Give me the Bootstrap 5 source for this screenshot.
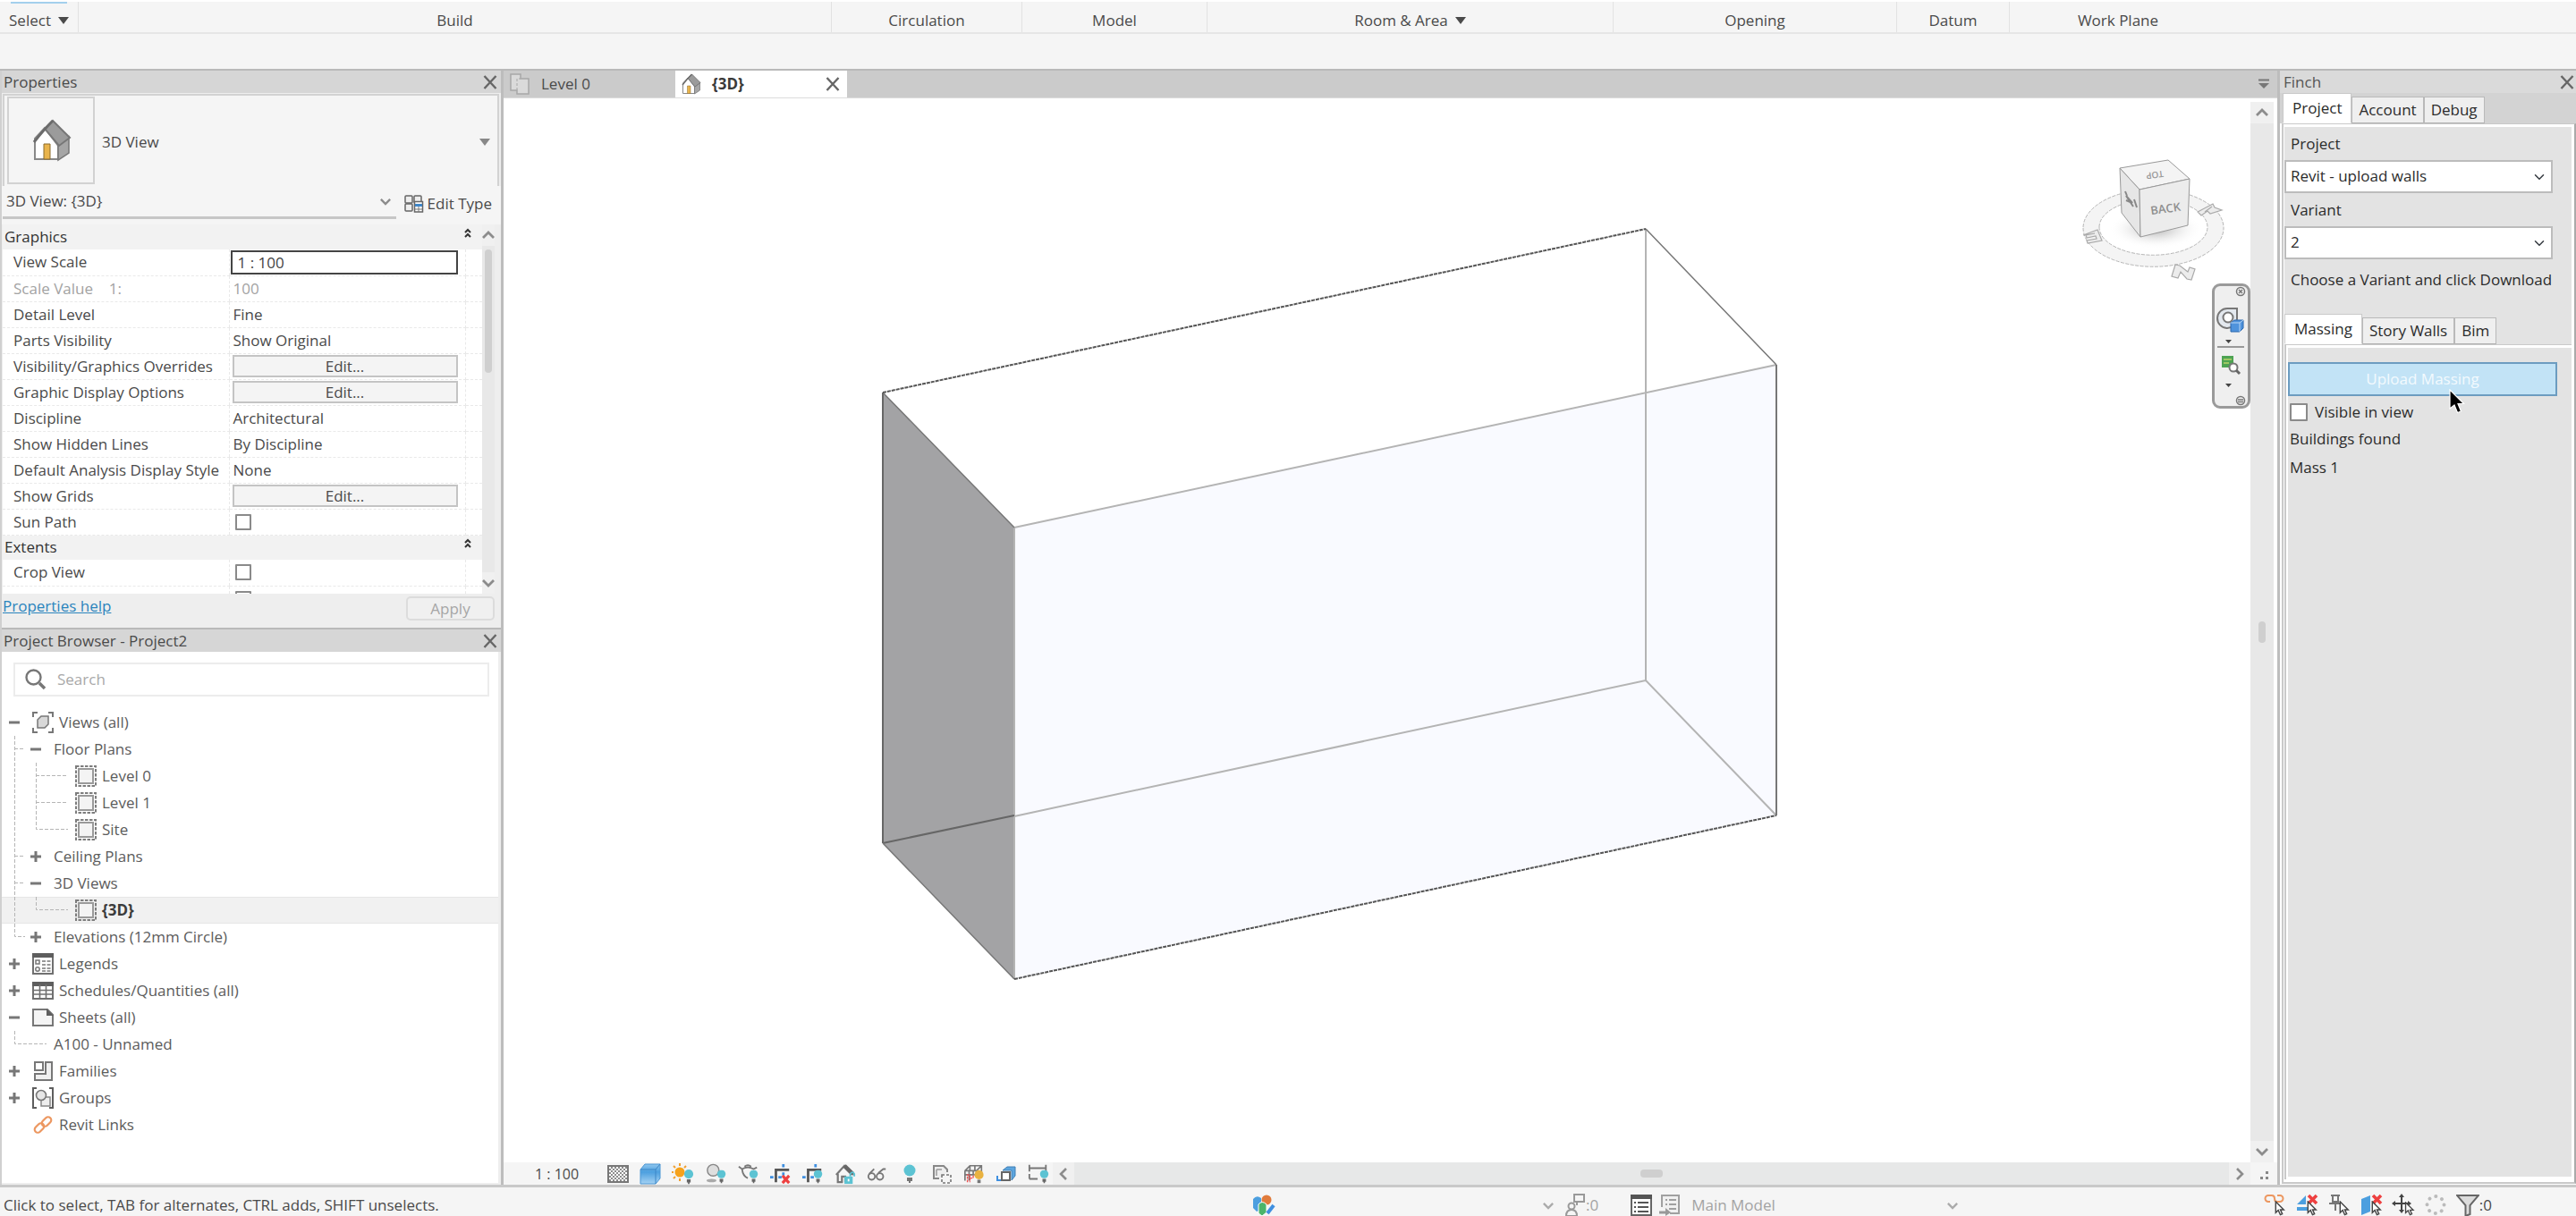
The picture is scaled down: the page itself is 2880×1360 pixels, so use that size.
<!DOCTYPE html>
<html lang="en">
<head>
<meta charset="utf-8">
<meta name="viewport" content="width=device-width, initial-scale=1">
<title>Project2 - {3D}</title>
<link rel="stylesheet" href="https://cdn.jsdelivr.net/npm/bootstrap@5.3.0/dist/css/bootstrap.min.css">
<style>
:root{--line:#bdbdbd;--soft:#f5f5f5;--bar:#d6d6d6}
body{font-family:"Open Sans","Noto Sans",sans-serif;font-size:17px;line-height:20px;color:#4a4a4a;background:#f5f5f5;min-height:100vh}
svg{display:block;flex:none}
button{font:inherit;color:inherit}
.plain{background:none;border:0;padding:0}
.ribbon{height:38px;border-top:2px solid #fff;border-bottom:2px solid #e6e6e6}
.rb-group{border-right:1px solid #e2e2e2;padding-top:7px}
.w-select{width:88px;padding-top:0}
.w-select .plain{padding-top:5px}
.w-build{width:842px}.w-circ{width:213px}.w-model{width:207px}.w-room{width:454px}.w-open{width:317px}.w-datum{width:126px}.w-plane{width:242px;border-right:0}
.blue-strip{height:2px;margin:0 12px;background:#a3cfec}
.options{height:39px}
.work{border-top:2px solid #b9b9b9;border-bottom:3px solid #c9c9c9}
.dock-left{width:563px;border-left:2px solid #d0d0d0;border-right:3px solid var(--line);background:#eee}
.dock-title{height:25px;background:var(--bar);padding:0 4px 0 2px}
.type-box{margin:1px 2px 0 1px;border:2px solid #d2d2d2;border-bottom:0;height:103px;padding:2px 0 0 3px;background:var(--soft)}
.type-thumb{width:98px;height:98px;border:2px solid #d2d2d2}
.inst{height:43px;background:var(--soft);padding:0 10px 0 1px}
.inst-pick{width:440px;height:37px;border-bottom:3px solid #c6c6c6;padding:0 6px 0 4px}
.prop-wrap{height:413px;overflow:hidden;margin:0 7px 0 1px;background:#fff}
.prop-table{table-layout:fixed;width:100%;border-collapse:collapse}
.prop-table td,.prop-table th{height:29px;padding:0;font-weight:400;vertical-align:middle;overflow:hidden;white-space:nowrap}
.prop-table tr.head th{height:28px;background:#f2f2f2;padding:0 12px 0 2px;color:#333}
.prop-table tbody td,.prop-table tbody tr:not(.head) th{border-bottom:1px dashed #e9e9e9}
.prop-table tbody tr:not(.head) th{padding-left:12px}
.prop-table td.val{border-left:1px dashed #e9e9e9;border-right:1px dashed #e9e9e9;padding-left:4px}
.c-name{width:253px}.c-end{width:18px}
.dim{color:#a3a3a3}
.scale-in{width:254px;height:27px;margin-left:-3px;border:2px solid #444;padding:0 6px;color:#444;display:block;background:#fff}
.edit-btn{display:block;width:252px;height:25px;margin-left:-1px;line-height:20px;border:2px solid #c4c4c4;background:#f4f4f4;padding:0}
.tick{appearance:none;width:18px;height:18px;border:2px solid #8a8a8a;background:#fff;display:block;margin:0 0 0 2px;border-radius:1px}
.tick-lg{width:20px;height:20px}
.vbar{width:26px;background:#e8e8e8}
.vbar button,.hbar button{background:#f0f0f0;border:0;padding:0;display:grid;place-items:center}
.vbar button{height:24px;width:100%}
.vthumb{width:8px;border-radius:4px;background:#cfcfcf}
.prop-foot{height:38px;padding:0 7px 0 1px}
.prop-foot a{color:#2a84bd}
.apply{width:99px;height:27px;margin-top:3px;border:2px solid #dcdcdc;border-radius:5px;background:#f0f0f0;color:#a6a6a6;padding:0}
.browser{border-top:2px solid #b9b9b9}
.tree-pane{background:#fff;margin:0 3px 2px 0}
.find{margin:12px 10px 14px 13px;height:38px;border:2px solid #ececec;padding-left:11px;gap:12px}
.find input{border:0;outline:0;background:none}
.find input::placeholder{color:#a9a9a9;opacity:1}
.tree-row{height:30px;padding-left:2px;color:#5c5c5c}
.tree-row.sel{background:#f1f1f1;border-top:1px solid #e6e6e6;border-bottom:1px solid #e6e6e6;font-weight:700;color:#3c3c3c}
.cell{width:24px;display:grid;place-items:center;height:30px}
.t-lbl{margin-left:6px}.t-sub{margin-left:8px}
.view-tabs{height:31px;background:#cbcbcb;border-bottom:1px solid #dcdcdc}
.vtab{width:192px;padding:0 8px 0 6px}
.vtab.on{background:#fff;font-weight:700;color:#3a3a3a}
.stage{background:#fff}
.canvas-pane{min-height:600px}
.cube{position:absolute;top:68px;right:0;width:196px}
.navbar-pad{position:absolute;top:207px;right:0;width:43px;height:140px;border:3px solid #9a9a9a;border-radius:9px;background:#efefef}
.view-foot{height:25px;background:var(--soft);padding-left:3px}
.scale-lbl{font-size:16px}
.vc{gap:12px}
.hbar{background:#e7e8e8}
.hbar button{height:25px;width:24px}
.hthumb{width:25px;height:9px;border-radius:4px;background:#cfcfcf}
.dock-right{width:334px;border-left:3px solid var(--line);background:#fff;color:#2b2b2b}
.dock-right .dock-title{background:#dadada;height:25px;padding:0 2px 0 4px;color:#555}
.tab-strip{background:#d3d3d3;height:34px;padding-left:3px}
.tab-strip.inner{background:#e3e3e3;padding-left:0}
.tb{height:30px;border:1px solid #b9b9b9;border-bottom-color:#b0b0b0;background:#efefef;padding:0 7px}
.tb.on{height:34px;background:#fff;border-color:#c9c9c9 #c9c9c9 #fff;padding:0 10px}
.page-outer{border:2px solid #c9c9c9;border-top:1px solid #c9c9c9;border-right-color:#aaa;margin-left:2px;margin-bottom:1px;padding:3px 3px 3px 1px}
.page-body{background:#e3e3e3}
.page-inner{border-left:2px solid #c9c9c9;border-top:1px solid #c9c9c9;background:#fff;padding:3px 0 3px 2px}
.fld{display:block;padding:0 0 0 7px;line-height:21px}
.pick{width:300px;height:37px;border:2px solid #bcbcbc;border-radius:0;padding:0 30px 2px 5px;font-size:17px;line-height:20px;color:#2b2b2b;background-color:#fff;background-size:12px 12px;background-position:right 7px center}
.upload{width:301px;height:38px;border:2px solid #6c9cc0;background:#c2e3f6;color:#f3fafe;padding:0}
.found{line-height:24px;padding-left:2px}
.pointer{position:absolute;left:180px;top:30px}
.status{height:32px;padding-top:8px}
.st-hint{width:1400px}
.st-mid{width:319px}
.st-list{margin-left:36px}
.st-model{margin-left:12px;width:298px}
.st-sel{gap:10px;padding-right:94px}
</style>
<script src="https://cdn.jsdelivr.net/npm/bootstrap@5.3.0/dist/js/bootstrap.bundle.min.js"></script>
</head>
<body class="d-flex flex-column">
<svg width="0" height="0" class="position-absolute" aria-hidden="true">
<defs>
<linearGradient id="gb" x1="0" y1="0" x2="0" y2="1"><stop offset="0" stop-color="#8fc6ee"/><stop offset=".4" stop-color="#4c9fdf"/><stop offset="1" stop-color="#a5d2f3"/></linearGradient>
<symbol id="x" viewBox="0 0 16 16"><path d="M1.500 1 14.500 15M14.500 1 1.500 15" stroke="#666" stroke-width="2.400" fill="none"/></symbol>
<symbol id="up" viewBox="0 0 14 10"><path d="M1 8 7 2 13 8" stroke="#8c8c8c" stroke-width="2.800" fill="none"/></symbol>
<symbol id="dn" viewBox="0 0 14 10"><path d="M1 2 7 8 13 2" stroke="#8c8c8c" stroke-width="2.800" fill="none"/></symbol>
<symbol id="lf" viewBox="0 0 10 14"><path d="M8 1 2 7 8 13" stroke="#8c8c8c" stroke-width="2.600" fill="none"/></symbol>
<symbol id="rt" viewBox="0 0 10 14"><path d="M2 1 8 7 2 13" stroke="#8c8c8c" stroke-width="2.600" fill="none"/></symbol>
<symbol id="tri" viewBox="0 0 12 8"><path d="M0 0H12L6 8Z" fill="currentColor"/></symbol>
<symbol id="dbl" viewBox="0 0 8 12"><path d="M1 5 4 2 7 5M1 10 4 7 7 10" stroke="#333" stroke-width="2" fill="none"/></symbol>
<symbol id="minus" viewBox="0 0 14 14"><path d="M1 7H13" stroke="#777" stroke-width="3"/></symbol>
<symbol id="plus" viewBox="0 0 14 14"><path d="M1 7H13M7 1V13" stroke="#777" stroke-width="3"/></symbol>
<symbol id="gv" viewBox="0 0 24 30"><path d="M12.500 0V30" stroke="#b5b5b5" stroke-dasharray="4 2"/></symbol>
<symbol id="gt" viewBox="0 0 24 30"><path d="M12.500 0V30M12 14.500H24" stroke="#b5b5b5" stroke-dasharray="4 2" fill="none"/></symbol>
<symbol id="gl" viewBox="0 0 24 30"><path d="M12.500 0V14.500H24" stroke="#b5b5b5" stroke-dasharray="4 2" fill="none"/></symbol>
<symbol id="gtw" viewBox="0 0 48 30"><path d="M12.500 0V30M12 14.500H48" stroke="#b5b5b5" stroke-dasharray="4 2" fill="none"/></symbol>
<symbol id="glw" viewBox="0 0 48 30"><path d="M12.500 0V14.500H48" stroke="#b5b5b5" stroke-dasharray="4 2" fill="none"/></symbol>
<symbol id="house" viewBox="0 0 46 48"><path d="M5 22 16 10 31 30V45H5Z" fill="#fff" stroke="#888" stroke-width="2"/><path d="M31 28 43 20V38L31 46Z" fill="#a6a6a6" stroke="#777" stroke-width="1.500"/><path d="M25 2 44 21 32 30 16 11Z" fill="#9b9b9b" stroke="#777" stroke-width="2"/><path d="M25 2Q15 12 4 26" stroke="#6b6b6b" stroke-width="3" fill="none"/><path d="M15 28H22V45H15Z" fill="#e9b44c" stroke="#8a6a2c" stroke-width="1"/></symbol>
<symbol id="plan" viewBox="0 0 24 24"><path d="M2 1H13V6H22V23H9V19H2Z" fill="#dadada" stroke="#a8a8a8" stroke-width="1.500"/><path d="M9 19V6H13" fill="none" stroke="#a8a8a8" stroke-dasharray="3 2"/></symbol>
<symbol id="etype" viewBox="0 0 22 20"><rect x="1" y="1" width="8" height="8" rx="1" fill="#eee" stroke="#666" stroke-width="1.500"/><rect x="11" y="1" width="8" height="8" rx="1" fill="#eee" stroke="#666" stroke-width="1.500"/><rect x="1" y="10" width="8" height="8" rx="1" fill="#eee" stroke="#666" stroke-width="1.500"/><path d="M11.500 7.500H20.500V19H11.500Z" fill="#fff" stroke="#666" stroke-width="1.500"/><path d="M12 10H20V13H12Z" fill="#3f86c8"/><path d="M12 16H20M16 13V19" stroke="#777"/></symbol>
<symbol id="lens" viewBox="0 0 24 24"><circle cx="9.500" cy="9.500" r="8" fill="none" stroke="#777" stroke-width="2.400"/><path d="M16 16 22 22" stroke="#777" stroke-width="3.600"/></symbol>
<symbol id="views" viewBox="0 0 24 24"><path d="M1 6V1H6M18 1H23V6M23 18V23H18M6 23H1V18" fill="none" stroke="#777" stroke-width="2"/><path d="M6 9 10 5H18V14L14 18H6Z" fill="#d8d8d8" stroke="#777" stroke-width="1.500"/></symbol>
<symbol id="sheetv" viewBox="0 0 24 24"><rect x="1" y="1" width="22" height="22" fill="none" stroke="#7d7d7d" stroke-width="2" stroke-dasharray="3.500 1.500"/><rect x="4" y="4" width="16" height="16" fill="#f4f4f4" stroke="#9a9a9a" stroke-width="2"/></symbol>
<symbol id="legend" viewBox="0 0 24 24"><rect x="1" y="1" width="22" height="22" fill="#fff" stroke="#707070" stroke-width="2"/><path d="M0 0H24V5H0Z" fill="#5e5e5e"/><rect x="4" y="8" width="4" height="4" fill="none" stroke="#777" stroke-width="1.500"/><circle cx="6" cy="18" r="2.200" fill="none" stroke="#777" stroke-width="1.500"/><path d="M11 9H21M11 13H21M11 17H21M11 20H21" stroke="#777" stroke-width="1.500" stroke-dasharray="4 1.500"/></symbol>
<symbol id="sched" viewBox="0 0 24 24"><rect x="1" y="3" width="22" height="18" fill="#fff" stroke="#707070" stroke-width="2"/><path d="M0 2H24V7H0Z" fill="#5e5e5e"/><path d="M1 11.500H23M1 16H23M8.500 5V21M15.500 5V21" stroke="#707070" stroke-width="1.600"/></symbol>
<symbol id="sheet" viewBox="0 0 24 24"><path d="M1 3H17L23 9V21H1Z" fill="#f4f4f4" stroke="#777" stroke-width="2"/><path d="M16 2 24 10H16Z" fill="#5e5e5e"/></symbol>
<symbol id="fam" viewBox="0 0 24 24"><rect x="3" y="2" width="9" height="9" fill="#fff" stroke="#777" stroke-width="2"/><path d="M15 2H22V22H3V15H15Z" fill="#f0f0f0" stroke="#777" stroke-width="2"/></symbol>
<symbol id="grp" viewBox="0 0 24 24"><path d="M5 1H1V23H5M19 1H23V23H19" fill="none" stroke="#5e5e5e" stroke-width="2"/><rect x="10" y="11" width="10" height="10" fill="#eee" stroke="#888" stroke-width="1.500"/><circle cx="10" cy="9" r="5.500" fill="#e6e6e6" stroke="#777" stroke-width="1.600"/></symbol>
<symbol id="link" viewBox="0 0 24 24"><g fill="none" stroke="#ec9760" stroke-width="2.200"><rect x="-6" y="-3.500" width="12" height="7" rx="3.500" transform="translate(8 15.500) rotate(-45)"/><rect x="-6" y="-3.500" width="12" height="7" rx="3.500" transform="translate(16 8.500) rotate(-45)"/></g></symbol>
<symbol id="bulb" viewBox="0 0 12 20"><circle cx="6" cy="6" r="6" fill="#5cc3d3"/><path d="M3.500 13H8.500V17H7V19H5V17H3.500Z" fill="#666"/></symbol>
<pattern id="chk" width="4" height="4" patternUnits="userSpaceOnUse"><path d="M0 0H2V2H0ZM2 2H4V4H2Z" fill="#8c8c8c"/></pattern>
<symbol id="v1" viewBox="0 0 24 24"><rect x="1" y="3" width="22" height="18" fill="#fff"/><rect x="1" y="3" width="22" height="18" fill="url(#chk)" stroke="#777" stroke-width="2"/></symbol>
<symbol id="v2" viewBox="0 0 24 24"><path d="M1 7 6 1H23V17L18 23H1Z" fill="url(#gb)" stroke="#4b96d4"/><path d="M1 7H18V23M18 7 23 1" fill="none" stroke="#3d86c6"/></symbol>
<symbol id="v3" viewBox="0 0 26 24"><circle cx="9" cy="10" r="5.500" fill="#f6a21b"/><path d="M9 0V3M9 17V20M0 10H2M16 10H19M2 3 4 5M16 3 14 5M2 17 4 15" stroke="#f0a030" stroke-width="2"/><use href="#bulb" x="13" y="7" width="12" height="17"/></symbol>
<symbol id="v4" viewBox="0 0 26 24"><circle cx="9" cy="7.500" r="7" fill="#dedede" stroke="#888" stroke-width="1.600"/><ellipse cx="7" cy="20" rx="6" ry="2" fill="#aaa"/><use href="#bulb" x="13" y="7" width="12" height="17"/></symbol>
<symbol id="v5" viewBox="0 0 26 24"><path d="M1 3 5 6Q12 2 19 6L23 4M5 6Q6 15 12 17M8 3Q12 0 16 3" fill="none" stroke="#777" stroke-width="2"/><use href="#bulb" x="13" y="7" width="12" height="17"/></symbol>
<symbol id="crop" viewBox="0 0 26 24"><path d="M7 22V7H23" fill="none" stroke="#555" stroke-width="3"/><path d="M16 0V4M0 16H4M16 10V14M10 16H14" stroke="#3f8fe0" stroke-width="3"/></symbol>
<symbol id="v6" viewBox="0 0 26 24"><use href="#crop" width="26" height="24"/><path d="M15 14 23 23M23 14 15 23" stroke="#ee4040" stroke-width="3.400"/></symbol>
<symbol id="v7" viewBox="0 0 26 24"><use href="#crop" width="26" height="24"/><use href="#bulb" x="13" y="7" width="12" height="17"/></symbol>
<symbol id="v8" viewBox="0 0 26 24"><path d="M2 13 12 2 23 13M4 12V22H9V15H13V22" fill="none" stroke="#777" stroke-width="2.400"/><path d="M12 2 22 12" stroke="#666" stroke-width="5"/><path d="M12 15H22V24H12Z" fill="#5cc3d3"/><path d="M19 15V12Q22 8 24 12V15" fill="none" stroke="#5cc3d3" stroke-width="2"/><path d="M17 18V21" stroke="#fff" stroke-width="2"/></symbol>
<symbol id="v9" viewBox="0 0 26 24"><g fill="none" stroke="#777" stroke-width="2"><circle cx="6" cy="15" r="4"/><circle cx="16" cy="15" r="4"/><path d="M3 12 9 6M14 11 20 6H23"/></g></symbol>
<symbol id="v10" viewBox="0 0 24 24"><circle cx="12" cy="8" r="6.500" fill="#5cc3d3"/><path d="M9 16H15V20H13V22H11V20H9Z" fill="#777"/></symbol>
<symbol id="v11" viewBox="0 0 24 24"><path d="M18 10V7L14 3H3V17H9" fill="#eee" stroke="#888" stroke-width="2"/><path d="M6 7H12M6 7V14" stroke="#999" stroke-width="1.500"/><rect x="12" y="13" width="10" height="9" fill="none" stroke="#777" stroke-width="1.600" stroke-dasharray="3 2"/></symbol>
<symbol id="v12" viewBox="0 0 26 24"><path d="M2 8 8 2H22V9M2 8H16V12M2 8V20M2 13H14M7 8V20M12 8V14M8 2V8M14 2V8M22 2 16 8" fill="none" stroke="#777" stroke-width="1.800"/><path d="M5 22V13H8V22M8 17H12V13" fill="none" stroke="#ee5050" stroke-width="1.500" stroke-dasharray="3 1"/><circle cx="19" cy="13" r="5.500" fill="#e9b240"/><path d="M17 19H21V23H17Z" fill="#777"/></symbol>
<symbol id="v13" viewBox="0 0 24 24"><path d="M8 8 13 4H22V14L18 19V8Z" fill="#5ca5de" stroke="#3f7fb5"/><rect x="7" y="10" width="9" height="9" fill="#fff" stroke="#666" stroke-width="2"/><path d="M2 14V19H6" fill="none" stroke="#3f8fe0" stroke-width="2"/></symbol>
<symbol id="v14" viewBox="0 0 26 24"><path d="M2 1V9M22 1V9M2 5H22M2 12V18M2 18H12" fill="none" stroke="#777" stroke-width="2"/><use href="#bulb" x="14" y="7" width="12" height="17"/></symbol>
<symbol id="arr" viewBox="0 0 12 18"><path d="M1 1V14L4 11 6.500 16.500 8.800 15.500 6.500 10.500H10.500Z" fill="#fff" stroke="#444" stroke-width="1.500"/></symbol>
<symbol id="s1" viewBox="0 0 26 26"><path d="M8 9H6A3.500 3.500 0 0 1 6 2H10Q13 2 13 5.500T16 9H19A3.500 3.500 0 0 0 19 2H16" fill="none" stroke="#ec9760" stroke-width="2"/><use href="#arr" x="13" y="8" width="12" height="17"/></symbol>
<symbol id="s2" viewBox="0 0 26 26"><path d="M2 12 12 2V12ZM2 15H14V19H2Z" fill="#4c9fdf"/><path d="M15 2 24 11M24 2 15 11" stroke="#ee4040" stroke-width="3.600"/><use href="#arr" x="13" y="8" width="12" height="17"/></symbol>
<symbol id="s3" viewBox="0 0 26 26"><path d="M4 2H14M6 2V9H12V2M2 11H16M9 11V19" fill="none" stroke="#777" stroke-width="2"/><use href="#arr" x="13" y="8" width="12" height="17"/></symbol>
<symbol id="s4" viewBox="0 0 26 26"><path d="M2 6 12 2V20L2 24Z" fill="#4c9fdf"/><path d="M15 2 24 11M24 2 15 11" stroke="#ee4040" stroke-width="3.600"/><use href="#arr" x="13" y="8" width="12" height="17"/></symbol>
<symbol id="s5" viewBox="0 0 26 26"><path d="M11 2V20M2 11H20" stroke="#444" stroke-width="2"/><path d="M11 0 14 4H8ZM11 22 14 18H8ZM0 11 4 8V14ZM22 11 18 8V14Z" fill="#444"/><use href="#arr" x="14" y="9" width="12" height="16"/></symbol>
<symbol id="s6" viewBox="0 0 26 26"><circle cx="13" cy="12.500" r="9.500" fill="none" stroke="#bbb" stroke-width="4" stroke-linecap="round" stroke-dasharray="0.100 7.360"/></symbol>
<symbol id="s7" viewBox="0 0 26 26"><path d="M1 2H25L15.500 13V23L10.500 25V13Z" fill="#dcdcdc" stroke="#666" stroke-width="2"/></symbol>
<symbol id="m0" viewBox="0 0 26 26"><path d="M1 6Q5 1 10 5V18L5 20 1 16Z" fill="#4c9fdf"/><circle cx="16" cy="7" r="5.500" fill="#e07b3c"/><path d="M7 12Q11 7 16 12V21L11 25 7 22Z" fill="#4cb56a" stroke="#fff"/><path d="M24 13 17 22" stroke="#3f8fe0" stroke-width="4"/></symbol>
<symbol id="m1" viewBox="0 0 24 26"><rect x="11" y="1" width="11" height="8" fill="#f5f5f5" stroke="#999" stroke-width="2"/><path d="M14 9V13" stroke="#999" stroke-width="2"/><circle cx="8" cy="14" r="3.500" fill="none" stroke="#999" stroke-width="2"/><path d="M2 25Q2 18 8 18T14 25Z" fill="none" stroke="#999" stroke-width="2"/></symbol>
<symbol id="m2" viewBox="0 0 24 24"><rect x="1" y="1" width="22" height="22" fill="#fff" stroke="#666" stroke-width="2"/><path d="M0 0H24V5H0Z" fill="#555"/><path d="M4 9H6M4 14H6M4 19H6M8 9H20M8 14H20M8 19H20" stroke="#555" stroke-width="2"/></symbol>
<symbol id="m3" viewBox="0 0 24 24"><path d="M3 14V1H22V21H12" fill="#f0f0f0" stroke="#a0a0a0" stroke-width="2"/><path d="M7 6H9M7 11H9M11 6H19M11 11H19M11 16H19" stroke="#a0a0a0" stroke-width="2"/><path d="M0 20H8" stroke="#999" stroke-width="3"/><path d="M7 15 13 20 7 24Z" fill="#999"/></symbol>
</defs>
</svg>

<header class="ribbon d-flex">
  <div class="rb-group w-select d-flex flex-column"><div class="blue-strip"></div>
    <button class="plain flex-grow-1 d-flex align-items-center justify-content-center gap-2">Select <svg width="12" height="8"><use href="#tri"/></svg></button></div>
  <div class="rb-group w-build d-flex align-items-center justify-content-center">Build</div>
  <div class="rb-group w-circ d-flex align-items-center justify-content-center">Circulation</div>
  <div class="rb-group w-model d-flex align-items-center justify-content-center">Model</div>
  <div class="rb-group w-room d-flex align-items-center justify-content-center"><button class="plain d-flex align-items-center gap-2">Room &amp; Area <svg width="12" height="8"><use href="#tri"/></svg></button></div>
  <div class="rb-group w-open d-flex align-items-center justify-content-center">Opening</div>
  <div class="rb-group w-datum d-flex align-items-center justify-content-center">Datum</div>
  <div class="rb-group w-plane d-flex align-items-center justify-content-center">Work Plane</div>
</header>
<div class="options"></div>

<main class="work d-flex flex-grow-1">
  <aside class="dock-left d-flex flex-column flex-shrink-0">
    <div class="dock-title d-flex align-items-center justify-content-between"><span>Properties</span><button class="plain" aria-label="Close properties"><svg width="16" height="16"><use href="#x"/></svg></button></div>
    <div class="type-box d-flex align-items-center">
      <div class="type-thumb d-flex align-items-center justify-content-center mb-1"><svg width="46" height="48"><use href="#house"/></svg></div>
      <span class="ms-2 flex-grow-1">3D View</span>
      <svg class="me-2" width="12" height="8" color="#888"><use href="#tri"/></svg>
    </div>
    <div class="inst d-flex justify-content-between">
      <div class="inst-pick d-flex align-items-center justify-content-between"><span>3D View: {3D}</span><svg width="12" height="9"><use href="#dn"/></svg></div>
      <button class="plain d-flex align-items-center gap-1 pb-1"><svg width="22" height="20"><use href="#etype"/></svg>Edit Type</button>
    </div>
    <div class="prop-wrap d-flex">
      <div class="flex-grow-1">
      <table class="prop-table">
        <colgroup><col class="c-name"><col><col class="c-end"></colgroup>
        <tbody>
        <tr class="head"><th colspan="3"><div class="d-flex justify-content-between"><span>Graphics</span><svg width="8" height="12"><use href="#dbl"/></svg></div></th></tr>
        <tr><th><label for="vs">View Scale</label></th><td class="val"><input id="vs" class="scale-in" value="1 : 100"></td><td></td></tr>
        <tr class="dim"><th>Scale Value &nbsp;&nbsp; 1:</th><td class="val">100</td><td></td></tr>
        <tr><th>Detail Level</th><td class="val">Fine</td><td></td></tr>
        <tr><th>Parts Visibility</th><td class="val">Show Original</td><td></td></tr>
        <tr><th>Visibility/Graphics Overrides</th><td class="val"><button class="edit-btn">Edit...</button></td><td></td></tr>
        <tr><th>Graphic Display Options</th><td class="val"><button class="edit-btn">Edit...</button></td><td></td></tr>
        <tr><th>Discipline</th><td class="val">Architectural</td><td></td></tr>
        <tr><th>Show Hidden Lines</th><td class="val">By Discipline</td><td></td></tr>
        <tr><th>Default Analysis Display Style</th><td class="val">None</td><td></td></tr>
        <tr><th>Show Grids</th><td class="val"><button class="edit-btn">Edit...</button></td><td></td></tr>
        <tr><th><label for="sp">Sun Path</label></th><td class="val"><input id="sp" type="checkbox" class="tick"></td><td></td></tr>
        <tr class="head"><th colspan="3"><div class="d-flex justify-content-between"><span>Extents</span><svg width="8" height="12"><use href="#dbl"/></svg></div></th></tr>
        <tr><th><label for="cv">Crop View</label></th><td class="val"><input id="cv" type="checkbox" class="tick"></td><td></td></tr>
        <tr><th><label for="cr">Crop Region Visible</label></th><td class="val"><input id="cr" type="checkbox" class="tick"></td><td></td></tr>
        </tbody>
      </table>
      </div>
      <div class="vbar d-flex flex-column align-items-center">
        <button aria-label="Scroll up"><svg width="14" height="10"><use href="#up"/></svg></button>
        <div class="vthumb mt-1" style="height:138px"></div>
        <button class="mt-auto" aria-label="Scroll down"><svg width="14" height="10"><use href="#dn"/></svg></button>
      </div>
    </div>
    <div class="prop-foot d-flex justify-content-between align-items-start"><a class="pt-1" href="#">Properties help</a><button class="apply" disabled>Apply</button></div>

    <section class="browser d-flex flex-column flex-grow-1">
      <div class="dock-title d-flex align-items-center justify-content-between"><span>Project Browser - Project2</span><button class="plain" aria-label="Close project browser"><svg width="16" height="16"><use href="#x"/></svg></button></div>
      <div class="tree-pane flex-grow-1 d-flex flex-column">
        <div class="find d-flex align-items-center"><svg width="24" height="24"><use href="#lens"/></svg><input class="flex-grow-1 p-0" type="text" placeholder="Search" aria-label="Search"></div>
        <div class="tree-row d-flex align-items-center"><span class="cell"><svg width="14" height="14"><use href="#minus"/></svg></span><svg class="ms-2" width="24" height="24"><use href="#views"/></svg><span class="t-lbl">Views (all)</span></div>
        <div class="tree-row d-flex align-items-center"><svg width="24" height="30"><use href="#gt"/></svg><span class="cell"><svg width="14" height="14"><use href="#minus"/></svg></span><span class="t-sub">Floor Plans</span></div>
        <div class="tree-row d-flex align-items-center"><svg width="24" height="30"><use href="#gv"/></svg><svg width="48" height="30"><use href="#gtw"/></svg><svg class="ms-2" width="24" height="24"><use href="#sheetv"/></svg><span class="t-lbl">Level 0</span></div>
        <div class="tree-row d-flex align-items-center"><svg width="24" height="30"><use href="#gv"/></svg><svg width="48" height="30"><use href="#gtw"/></svg><svg class="ms-2" width="24" height="24"><use href="#sheetv"/></svg><span class="t-lbl">Level 1</span></div>
        <div class="tree-row d-flex align-items-center"><svg width="24" height="30"><use href="#gv"/></svg><svg width="48" height="30"><use href="#glw"/></svg><svg class="ms-2" width="24" height="24"><use href="#sheetv"/></svg><span class="t-lbl">Site</span></div>
        <div class="tree-row d-flex align-items-center"><svg width="24" height="30"><use href="#gt"/></svg><span class="cell"><svg width="14" height="14"><use href="#plus"/></svg></span><span class="t-sub">Ceiling Plans</span></div>
        <div class="tree-row d-flex align-items-center"><svg width="24" height="30"><use href="#gt"/></svg><span class="cell"><svg width="14" height="14"><use href="#minus"/></svg></span><span class="t-sub">3D Views</span></div>
        <div class="tree-row sel d-flex align-items-center"><svg width="24" height="30"><use href="#gv"/></svg><svg width="48" height="30"><use href="#glw"/></svg><svg class="ms-2" width="24" height="24"><use href="#sheetv"/></svg><span class="t-lbl">{3D}</span></div>
        <div class="tree-row d-flex align-items-center"><svg width="24" height="30"><use href="#gl"/></svg><span class="cell"><svg width="14" height="14"><use href="#plus"/></svg></span><span class="t-sub">Elevations (12mm Circle)</span></div>
        <div class="tree-row d-flex align-items-center"><span class="cell"><svg width="14" height="14"><use href="#plus"/></svg></span><svg class="ms-2" width="24" height="24"><use href="#legend"/></svg><span class="t-lbl">Legends</span></div>
        <div class="tree-row d-flex align-items-center"><span class="cell"><svg width="14" height="14"><use href="#plus"/></svg></span><svg class="ms-2" width="24" height="24"><use href="#sched"/></svg><span class="t-lbl">Schedules/Quantities (all)</span></div>
        <div class="tree-row d-flex align-items-center"><span class="cell"><svg width="14" height="14"><use href="#minus"/></svg></span><svg class="ms-2" width="24" height="24"><use href="#sheet"/></svg><span class="t-lbl">Sheets (all)</span></div>
        <div class="tree-row d-flex align-items-center"><svg width="48" height="30"><use href="#glw"/></svg><span class="t-sub">A100 - Unnamed</span></div>
        <div class="tree-row d-flex align-items-center"><span class="cell"><svg width="14" height="14"><use href="#plus"/></svg></span><svg class="ms-2" width="24" height="24"><use href="#fam"/></svg><span class="t-lbl">Families</span></div>
        <div class="tree-row d-flex align-items-center"><span class="cell"><svg width="14" height="14"><use href="#plus"/></svg></span><svg class="ms-2" width="24" height="24"><use href="#grp"/></svg><span class="t-lbl">Groups</span></div>
        <div class="tree-row d-flex align-items-center"><span class="cell"></span><svg class="ms-2" width="24" height="24"><use href="#link"/></svg><span class="t-lbl">Revit Links</span></div>
      </div>
    </section>
  </aside>

  <section class="stage d-flex flex-column flex-grow-1">
    <div class="view-tabs d-flex">
      <div class="vtab d-flex align-items-center"><svg width="24" height="24"><use href="#plan"/></svg><span class="ms-2 ps-1">Level 0</span></div>
      <div class="vtab on d-flex align-items-center"><svg width="23" height="24"><use href="#house"/></svg><span class="ms-2 ps-1 flex-grow-1">{3D}</span><button class="plain" aria-label="Close view"><svg width="16" height="16"><use href="#x"/></svg></button></div>
      <svg class="ms-auto me-2 align-self-center" width="14" height="12" viewBox="0 0 14 12"><path d="M1 1.500H13" stroke="#777" stroke-width="2"/><path d="M1 5H13L7 11Z" fill="#777"/></svg>
    </div>
    <div class="d-flex flex-grow-1">
      <div class="canvas-pane position-relative flex-grow-1">
        <svg class="position-absolute w-100 h-100" viewBox="563 110 1953 1190" role="img" aria-label="Mass model">
          <path d="M987 439 1134 590V1095L987 943Z" fill="#a3a3a5"/>
          <path d="M1134 590 1986 408V912L1134 1095Z" fill="#f9faff"/>
          <path d="M1134 590 1986 408M1840 256V761L1134 913M1840 761 1986 912M1134 590V1095" fill="none" stroke="#b4b4b4" stroke-width="2"/>
          <path d="M987 943 1134 912M987 439V943" stroke="#666" stroke-width="2"/>
          <path d="M987 439 1134 590M1840 256 1986 408M987 943 1134 1095" fill="none" stroke="#777" stroke-width="1.500"/>
          <path d="M987 439 1840 256M1134 1095 1986 912" fill="none" stroke="#555" stroke-width="2" stroke-dasharray="4 1"/>
          <path d="M1986 408V912" stroke="#777" stroke-width="2"/>
        </svg>
        <svg class="cube" width="196" height="140" viewBox="2320 178 196 140" aria-label="View cube">
          <defs><radialGradient id="sh"><stop offset="0" stop-color="#999" stop-opacity=".8"/><stop offset="1" stop-color="#fff" stop-opacity="0"/></radialGradient></defs>
          <path fill-rule="evenodd" d="M2329 255A78 43 0 1 0 2486 255A78 43 0 1 0 2329 255ZM2347 254A60 31 0 1 1 2468 254A60 31 0 1 1 2347 254Z" fill="#f4f4f4" stroke="#b5b5b5" stroke-width="1" stroke-dasharray="4 1.500"/>
          <ellipse cx="2410" cy="256" rx="52" ry="22" fill="url(#sh)"/>
          <path d="M2370 188 2424 179 2448 200 2392 212Z" fill="#f4f4f4" stroke="#999"/>
          <path d="M2370 188 2392 212 2393 265 2372 238Z" fill="#e6e6e6" stroke="#999"/>
          <path d="M2392 212 2448 200 2446 252 2393 265Z" fill="#ececec" stroke="#999"/>
          <text x="2421" y="238" font-size="13" font-weight="600" text-anchor="middle" fill="#8f8f8f" transform="rotate(-8 2421 233)">BACK</text>
          <text x="2409" y="198" font-size="10" font-weight="600" text-anchor="middle" fill="#999" transform="rotate(172 2409 195)">TOP</text>
          <path d="M2376 214 2378 219M2377 224 2384 227 2377 219 2385 231M2386 223 2389 232" stroke="#888" stroke-width="2" fill="none"/>
          <g fill="#ececec" stroke="#aaa" stroke-width="1.200"><path d="M2428 309 2432 296 2437 297 2446 304 2448 299 2454 301 2450 313 2445 312 2438 304 2435 311Z"/><path d="M2329 263 2345 257 2350 269 2334 272 2333 269 2344 267 2343 264 2333 266 2332 263 2342 261Z"/><path d="M2457 237 2474 228 2476 232 2484 235 2471 239 2468 236 2461 241ZM2473 231 2465 237"/></g>
        </svg>
        <div class="navbar-pad d-flex flex-column align-items-center">
          <svg width="37" height="134" viewBox="0 0 37 134">
            <g fill="none" stroke="#777" stroke-width="1.500"><circle cx="29" cy="6" r="4.500"/><path d="M27 4 31 8M31 4 27 8"/><circle cx="29" cy="128" r="4.500"/><path d="M26 127H32M26 129.500H32"/></g>
            <path d="M14 25H25V37A11 11 0 1 1 14 25Z" fill="#e3e8ee" stroke="#777" stroke-width="2"/><circle cx="15" cy="35" r="5.500" fill="#fff" stroke="#777" stroke-width="2"/>
            <path d="M18 41 22 38H32V47L28 51H18Z" fill="#4f93dc" stroke="#2b67ad"/><path d="M18 41H28V51M28 41 32 38" stroke="#b9d6f5" fill="none"/>
            <path d="M12 60H19L15.500 64Z" fill="#444"/><path d="M3 68H33" stroke="#999" stroke-width="2"/>
            <path d="M8 78H21V91H8Z" fill="#4ea353"/><path d="M10 82H19M10 86H16" stroke="#b9d36a" stroke-width="1.500"/><circle cx="21" cy="91" r="4.500" fill="#fff" stroke="#777" stroke-width="2"/><path d="M24 94 28 98" stroke="#666" stroke-width="3"/>
            <path d="M12 109H19L15.500 113Z" fill="#444"/>
          </svg>
        </div>
      </div>
      <div class="vbar d-flex flex-column align-items-center justify-content-between mt-1 me-1">
        <button aria-label="Scroll up"><svg width="14" height="10"><use href="#up"/></svg></button>
        <div class="vthumb" style="height:24px"></div>
        <button aria-label="Scroll down"><svg width="14" height="10"><use href="#dn"/></svg></button>
      </div>
    </div>
    <div class="view-foot d-flex align-items-center">
      <span class="scale-lbl ps-4 ms-2 me-4 flex-shrink-0">1 : 100</span>
      <div class="vc d-flex ms-2 me-1">
        <svg width="24" height="24"><use href="#v1"/></svg><svg width="24" height="24"><use href="#v2"/></svg><svg width="26" height="24" class="me-n1"><use href="#v3"/></svg><svg width="24" height="24"><use href="#v4"/></svg><svg width="24" height="24"><use href="#v5"/></svg><svg width="24" height="24"><use href="#v6"/></svg><svg width="24" height="24"><use href="#v7"/></svg><svg width="24" height="24"><use href="#v8"/></svg><svg width="24" height="24"><use href="#v9"/></svg><svg width="24" height="24"><use href="#v10"/></svg><svg width="24" height="24"><use href="#v11"/></svg><svg width="24" height="24"><use href="#v12"/></svg><svg width="24" height="24"><use href="#v13"/></svg><svg width="24" height="24"><use href="#v14"/></svg>
      </div>
      <div class="hbar d-flex flex-grow-1 align-items-center justify-content-between">
        <button aria-label="Scroll left"><svg width="10" height="14"><use href="#lf"/></svg></button>
        <div class="hthumb"></div>
        <button aria-label="Scroll right"><svg width="10" height="14"><use href="#rt"/></svg></button>
      </div>
      <svg width="30" height="25" viewBox="0 0 30 25"><path d="M17 10H20V13H17ZM17 16H20V19H17ZM11 16H14V19H11Z" fill="#888"/></svg>
    </div>
  </section>

  <aside class="dock-right d-flex flex-column flex-shrink-0">
    <div class="dock-title d-flex align-items-center justify-content-between"><span>Finch</span><button class="plain" aria-label="Close Finch"><svg width="16" height="16"><use href="#x"/></svg></button></div>
    <div class="tab-strip d-flex align-items-end" role="tablist"><button class="tb on" role="tab">Project</button><button class="tb" role="tab">Account</button><button class="tb" role="tab">Debug</button></div>
    <div class="page-outer flex-grow-1 d-flex flex-column">
      <div class="page-body flex-grow-1 d-flex flex-column">
        <label class="fld pt-2 pb-2" for="proj">Project</label>
        <select id="proj" class="form-select pick"><option>Revit - upload walls</option></select>
        <label class="fld pt-2 pb-2" for="variant">Variant</label>
        <select id="variant" class="form-select pick"><option>2</option></select>
        <p class="fld mb-4 pt-2 pb-1 mt-1 text-nowrap">Choose a Variant and click Download</p>
        <div class="tab-strip inner d-flex align-items-end" role="tablist"><button class="tb on" role="tab">Massing</button><button class="tb" role="tab">Story Walls</button><button class="tb" role="tab">Bim</button></div>
        <div class="page-inner flex-grow-1 d-flex flex-column">
          <div class="page-body flex-grow-1">
            <div class="position-relative pt-3"><button class="upload">Upload Massing</button>
              <svg class="pointer mt-3" width="18" height="28" viewBox="0 0 18 28"><path d="M1 1V22L6 18 9.500 26.500 13.500 25 10 16.500H16.500Z" fill="#000" stroke="#fff" stroke-width="1.200"/></svg></div>
            <div class="d-flex align-items-center mt-2"><input type="checkbox" id="vis" class="tick tick-lg"><label for="vis" class="ms-2">Visible in view</label></div>
            <p class="found mb-0 mt-2">Buildings found</p>
            <p class="found mb-0 mt-2">Mass 1</p>
          </div>
        </div>
      </div>
    </div>
  </aside>
</main>

<footer class="status d-flex align-items-center">
  <span class="st-hint ps-1 flex-shrink-0">Click to select, TAB for alternates, CTRL adds, SHIFT unselects.</span>
  <svg width="26" height="26"><use href="#m0"/></svg>
  <div class="st-mid d-flex justify-content-end pe-2"><svg width="12" height="9" opacity=".7"><use href="#dn"/></svg></div>
  <svg class="ms-1" width="24" height="26"><use href="#m1"/></svg><span class="dim">:0</span>
  <svg class="st-list" width="24" height="24"><use href="#m2"/></svg><svg class="ms-2" width="24" height="24"><use href="#m3"/></svg>
  <div class="st-model dim d-flex align-items-center justify-content-between"><span>Main Model</span><svg width="12" height="9" opacity=".7"><use href="#dn"/></svg></div>
  <div class="st-sel d-flex flex-grow-1 align-items-center justify-content-end">
    <svg width="26" height="26"><use href="#s1"/></svg><svg width="26" height="26"><use href="#s2"/></svg><svg width="26" height="26"><use href="#s3"/></svg><svg width="26" height="26"><use href="#s4"/></svg><svg width="26" height="26"><use href="#s5"/></svg><svg width="26" height="26"><use href="#s6"/></svg>
    <span class="d-flex align-items-center"><svg width="26" height="26"><use href="#s7"/></svg>:0</span>
  </div>
</footer>
</body>
</html>
